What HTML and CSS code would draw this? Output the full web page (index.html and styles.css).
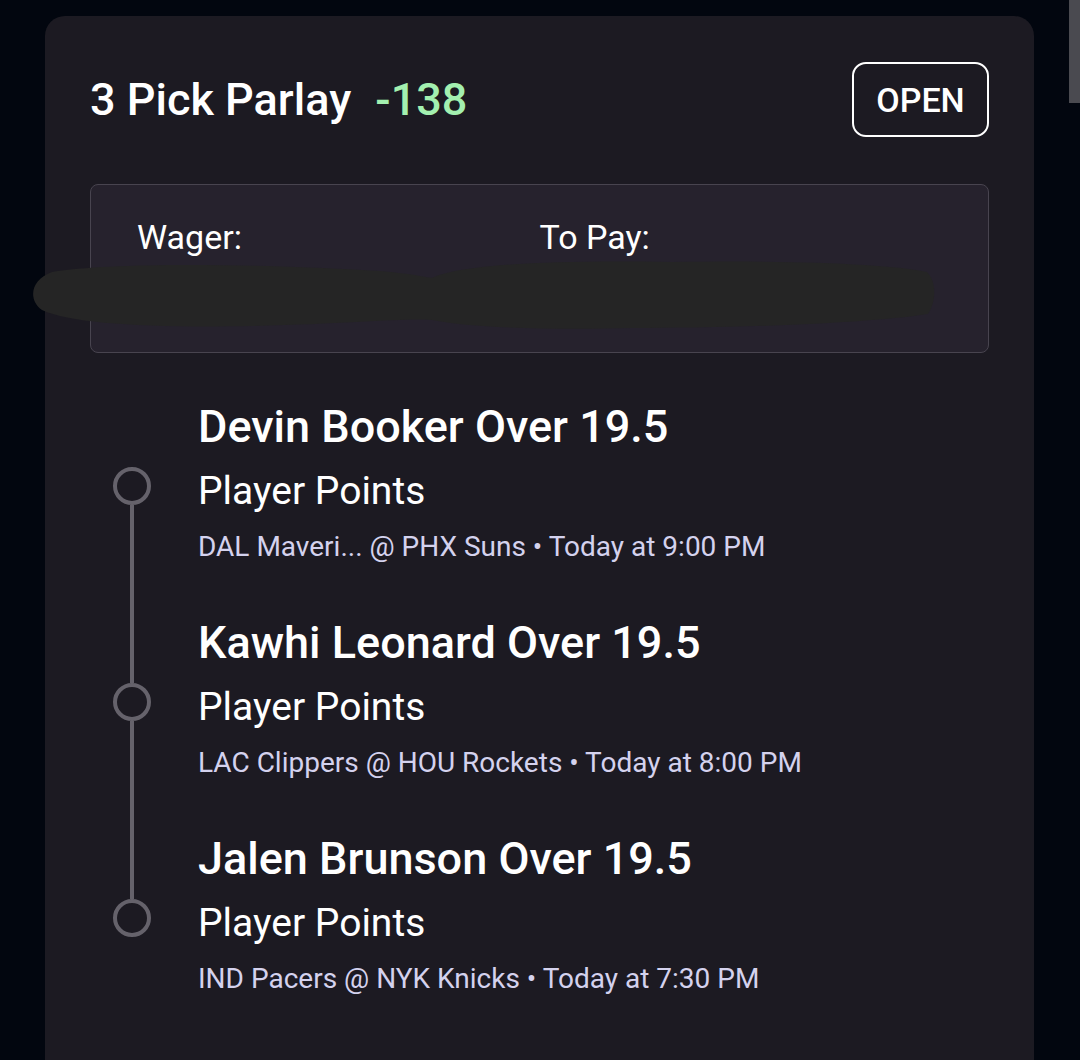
FILE: index.html
```html
<!DOCTYPE html>
<html lang="en">
  <head>
    <meta charset="UTF-8" />
    <meta name="viewport" content="width=device-width, initial-scale=1" />
    <title>3 Pick Parlay</title>
    <link rel="stylesheet" href="styles.css">
  </head>
  <body>
    <div class="scrollbar"></div>

    <main class="bet-card">
      <header class="bet-header">
        <h1 class="bet-title">3 Pick Parlay <span class="odds">-138</span></h1>
        <span class="status">OPEN</span>
      </header>

      <section class="summary">
        <div class="summary-col">Wager:</div>
        <div class="summary-col">To Pay:</div>
      </section>

      <!-- scribbled out amounts -->
      <svg class="redact" width="910" height="74" viewBox="0 0 910 74" aria-hidden="true">
        <path d="M20 14 C80 4 220 6 330 12 C370 14 388 18 400 20 C430 6 520 2 640 4 C760 2 860 6 895 14 C905 24 904 44 896 56 C830 66 700 70 600 70 C520 72 440 70 400 62 C370 60 320 66 220 68 C120 70 40 66 10 52 C-4 42 -2 22 20 14 Z" fill="#252525" />
      </svg>

      <ol class="legs">
        <li class="leg first">
          <div class="rail"><span class="seg top"></span><span class="dot"></span><span class="seg bottom"></span></div>
          <div class="leg-body">
            <div class="leg-title">Devin Booker Over 19.5</div>
            <div class="leg-market">Player Points</div>
            <div class="leg-meta">DAL Maveri... @ PHX Suns • Today at 9:00 PM</div>
          </div>
        </li>
        <li class="leg">
          <div class="rail"><span class="seg top"></span><span class="dot"></span><span class="seg bottom"></span></div>
          <div class="leg-body">
            <div class="leg-title">Kawhi Leonard Over 19.5</div>
            <div class="leg-market">Player Points</div>
            <div class="leg-meta">LAC Clippers @ HOU Rockets • Today at 8:00 PM</div>
          </div>
        </li>
        <li class="leg last">
          <div class="rail"><span class="seg top"></span><span class="dot"></span><span class="seg bottom"></span></div>
          <div class="leg-body">
            <div class="leg-title">Jalen Brunson Over 19.5</div>
            <div class="leg-market">Player Points</div>
            <div class="leg-meta">IND Pacers @ NYK Knicks • Today at 7:30 PM</div>
          </div>
        </li>
      </ol>
    </main>
  </body>
</html>
```

FILE: styles.css
```css
/* Reset */
* {
  margin: 0;
  padding: 0;
  box-sizing: border-box;
}
html,
body {
  height: 100%;
  overflow: hidden;
  background-color: #02060f;
  font-family: Roboto, "Liberation Sans", sans-serif;
  color: #ffffff;
}

/* fake scrollbar thumb */
.scrollbar {
  position: fixed;
  top: 0;
  right: 0;
  width: 11px;
  height: 103px;
  background: #4a4a50;
}

/* Card */
.bet-card {
  position: relative;
  width: 989px;
  min-height: 1044px;
  margin: 16px 0 0 45px;
  padding: 46px 45px 0;
  background: #1c1a22;
  border-radius: 20px 20px 0 0;
}

.bet-header {
  display: flex;
  align-items: center;
  justify-content: space-between;
}
.bet-title {
  font-size: 45px;
  line-height: 52px;
  font-weight: 500;
}
.odds {
  margin-left: 13px;
  color: #a3f0b0;
}
.status {
  display: flex;
  align-items: center;
  justify-content: center;
  width: 137px;
  height: 75px;
  border: 2px solid #ffffff;
  border-radius: 14px;
  font-size: 34px;
  font-weight: 500;
}

/* Wager box */
.summary {
  display: flex;
  height: 169px;
  margin-top: 47px;
  padding: 32px 46px 0;
  background: #26222d;
  border: 1px solid #48444f;
  border-radius: 8px;
}
.summary-col {
  width: 403px;
  font-size: 34px;
  line-height: 40px;
}

.redact {
  position: absolute;
  left: -13px;
  top: 242px;
}

/* Legs timeline */
.legs {
  list-style: none;
  margin-top: 50px;
}
.leg {
  display: grid;
  grid-template-columns: 84px 1fr;
  column-gap: 24px;
  height: 216px;
}
.rail {
  display: flex;
  flex-direction: column;
  align-items: center;
}
.seg {
  width: 4px;
  background: #65626b;
}
.seg.top {
  height: 64px;
}
.seg.bottom {
  flex: 1;
}
.first .seg.top,
.last .seg.bottom {
  background: transparent;
}
.dot {
  width: 38px;
  height: 38px;
  border: 4px solid #65626b;
  border-radius: 50%;
}

.leg-title {
  font-size: 45px;
  line-height: 48px;
  font-weight: 500;
}
.leg-market {
  margin-top: 18px;
  font-size: 39px;
  line-height: 44px;
}
.leg-meta {
  margin-top: 18px;
  font-size: 28px;
  line-height: 32px;
  color: #d4d2ee;
}
```
